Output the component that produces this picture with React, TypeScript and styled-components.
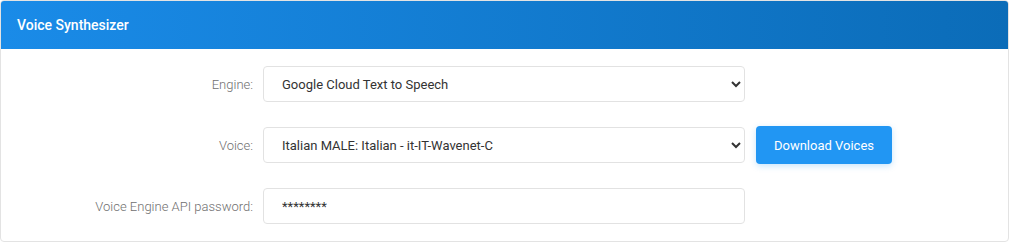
import React from "react";
import styled, { createGlobalStyle } from "styled-components";

const Global = createGlobalStyle`
  html, body { margin: 0; padding: 0; background: #fff; }
  body { font-family: Roboto, "Liberation Sans", Arial, sans-serif; }
  * { box-sizing: border-box; }
`;

const Card = styled.div`
  width: 1009px;
  margin: 0;
  border: 1px solid #e3e3e3;
  border-radius: 4px;
  background: #fff;
  overflow: hidden;
`;

const Header = styled.div`
  height: 48px;
  display: flex;
  align-items: center;
  padding: 0 16px;
  background: linear-gradient(to right, #1a8be8, #0b6cb8);
  color: #fff;
  font-size: 14px;
  font-weight: 500;
`;

const Body = styled.div`
  padding: 17px 0 17px;
  display: flex;
  flex-direction: column;
  gap: 24px;
`;

const Row = styled.div`
  display: grid;
  grid-template-columns: 252px 482px auto;
  column-gap: 10px;
  align-items: center;
`;

const Label = styled.label`
  text-align: right;
  font-size: 13px;
  font-weight: 300;
  color: #6f6f6f;
`;

const fieldCss = `
  width: 482px;
  height: 36px;
  border: 1px solid #e2e2e2;
  border-radius: 4px;
  background: #fff;
  font-family: Roboto, "Liberation Sans", Arial, sans-serif;
  font-size: 13px;
  color: #333;
  outline: none;
`;

const Select = styled.select`
  ${fieldCss}
  padding: 0 6px 0 14px;
`;

const Input = styled.input`
  ${fieldCss}
  padding: 0 18px;
`;

const Button = styled.button`
  margin-left: 1px;
  width: 136px;
  height: 38px;
  border: none;
  border-radius: 4px;
  background: #2196f3;
  color: #fff;
  font-family: Roboto, "Liberation Sans", Arial, sans-serif;
  font-size: 13px;
  box-shadow: 0 2px 6px rgba(33, 150, 243, 0.25);
  justify-self: start;
`;

export default function App() {
  return (
    <>
      <Global />
      <Card>
        <Header>Voice Synthesizer</Header>
        <Body>
          <Row>
            <Label>Engine:</Label>
            <Select defaultValue="g">
              <option value="g">Google Cloud Text to Speech</option>
            </Select>
          </Row>
          <Row>
            <Label>Voice:</Label>
            <Select defaultValue="v">
              <option value="v">Italian MALE: Italian - it-IT-Wavenet-C</option>
            </Select>
            <Button>Download Voices</Button>
          </Row>
          <Row>
            <Label>Voice Engine API password:</Label>
            <Input type="text" defaultValue="********" />
          </Row>
        </Body>
      </Card>
    </>
  );
}
